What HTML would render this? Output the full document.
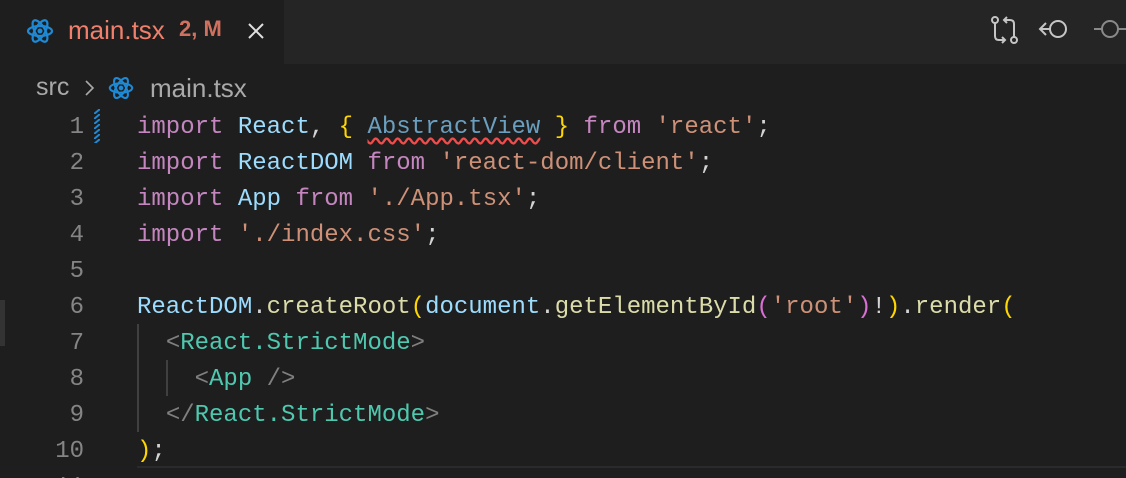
<!DOCTYPE html>
<html><head><style>
*{margin:0;padding:0;box-sizing:border-box}
html,body{width:1126px;height:478px;overflow:hidden}
body{background:#1e1e1e;position:relative;font-family:"Liberation Sans",sans-serif}
.tabbar{position:absolute;left:0;top:0;width:1126px;height:64px;background:#252526}
.tab{position:absolute;left:0;top:0;width:284px;height:64px;background:#1e1e1e}
.abs{position:absolute;white-space:pre}
.code{position:absolute;font-family:"Liberation Mono",monospace;font-size:24px;line-height:36px;height:368px;overflow:hidden}
.row{position:relative;height:36px}
.ln{position:absolute;left:0;width:84px;text-align:right;color:#858585}
.kw{color:#c586c0}.id{color:#9cdcfe}.st{color:#ce9178}.fn{color:#dcdcaa}.br{color:#ffd700}.tg{color:#4ec9b0}.pu{color:#808080}.df{color:#d4d4d4}.br2{color:#da70d6}
</style></head><body>
<div class="tabbar"><div class="tab"></div></div>
<svg class="abs" style="left:25px;top:16px" width="30" height="30" viewBox="-15 -15 30 30" fill="none" stroke="#1e8ad6" stroke-width="2.2"><ellipse rx="12" ry="5"/><ellipse rx="12" ry="5" transform="rotate(60)"/><ellipse rx="12" ry="5" transform="rotate(120)"/><circle r="2.5" fill="#1e8ad6" stroke="none"/></svg>
<div class="abs" style="left:68px;top:15px;font-size:26px;color:#f0806c">main.tsx</div>
<div class="abs" style="left:179px;top:16px;font-size:22px;color:#d0705e;font-weight:bold">2, M</div>
<svg class="abs" style="left:246px;top:21px" width="20" height="20" viewBox="0 0 20 20" stroke="#e0e0e0" stroke-width="2"><path d="M3 3L17 17M17 3L3 17"/></svg>
<svg class="abs" style="left:988px;top:14px" width="34" height="34" viewBox="0 0 34 34" fill="none" stroke="#c5c5c5" stroke-width="2"><circle cx="7" cy="6" r="3"/><path d="M7 9V22q0 4 4 4h6M14 23l3 3-3 3"/><circle cx="26" cy="26" r="3"/><path d="M26 23V10q0-4-4-4h-6M19 3l-3 3 3 3"/></svg>
<svg class="abs" style="left:1038px;top:16px" width="36" height="26" viewBox="0 0 36 26" fill="none" stroke="#c5c5c5" stroke-width="2"><circle cx="20" cy="13" r="8"/><path d="M12 13H3M8 7l-6 6 6 6"/></svg>
<svg class="abs" style="left:1094px;top:16px" width="32" height="26" viewBox="0 0 32 26" fill="none" stroke="#8a8a8a" stroke-width="2"><circle cx="16" cy="13" r="8"/><path d="M0 13h8M24 13h8"/></svg>
<div class="abs" style="left:36px;top:73px;font-size:25px;color:#a9a9a9">src</div>
<svg class="abs" style="left:83px;top:78px" width="12" height="20" viewBox="0 0 12 20" fill="none" stroke="#a9a9a9" stroke-width="1.6"><path d="M3 3l7 7-7 7"/></svg>
<svg class="abs" style="left:107px;top:74px" width="28" height="28" viewBox="-15 -15 30 30" fill="none" stroke="#1e8ad6" stroke-width="2.2"><ellipse rx="12" ry="5"/><ellipse rx="12" ry="5" transform="rotate(60)"/><ellipse rx="12" ry="5" transform="rotate(120)"/><circle r="2.5" fill="#1e8ad6" stroke="none"/></svg>
<div class="abs" style="left:150px;top:73px;font-size:26px;color:#a9a9a9">main.tsx</div>
<svg class="abs" style="left:94px;top:109px" width="6" height="34"><defs><pattern id="h" width="6" height="5" patternUnits="userSpaceOnUse"><path d="M0 5L6 0" stroke="#1e8ad6" stroke-width="2"/></pattern></defs><rect width="6" height="34" fill="url(#h)"/></svg>
<div class="abs" style="left:0;top:300px;width:5px;height:46px;background:#333"></div>
<div class="abs" style="left:137px;top:466px;width:989px;height:12px;background:#1e1e1e;border-top:2px solid #2a2a2a"></div>
<div class="abs" style="left:137px;top:324px;width:2px;height:108px;background:#404040"></div>
<div class="abs" style="left:166px;top:360px;width:2px;height:36px;background:#404040"></div>
<div class="code" style="left:0;top:110px;width:1126px"><div class="row"><span class="ln">1</span><span class="abs" style="left:137px"><span class="kw">import</span> <span class="id">React</span><span class="df">, </span><span class="br">{</span> <span style="color:#6a9fbf;text-decoration:underline wavy #f14c4c;text-underline-offset:4px">AbstractView</span> <span class="br">}</span> <span class="kw">from</span> <span class="st">'react'</span><span class="df">;</span></span></div><div class="row"><span class="ln">2</span><span class="abs" style="left:137px"><span class="kw">import</span> <span class="id">ReactDOM</span> <span class="kw">from</span> <span class="st">'react-dom/client'</span><span class="df">;</span></span></div><div class="row"><span class="ln">3</span><span class="abs" style="left:137px"><span class="kw">import</span> <span class="id">App</span> <span class="kw">from</span> <span class="st">'./App.tsx'</span><span class="df">;</span></span></div><div class="row"><span class="ln">4</span><span class="abs" style="left:137px"><span class="kw">import</span> <span class="st">'./index.css'</span><span class="df">;</span></span></div><div class="row"><span class="ln">5</span></div><div class="row"><span class="ln">6</span><span class="abs" style="left:137px"><span class="id">ReactDOM</span><span class="df">.</span><span class="fn">createRoot</span><span class="br">(</span><span class="id">document</span><span class="df">.</span><span class="fn">getElementById</span><span class="br2">(</span><span class="st">'root'</span><span class="br2">)</span><span class="df">!</span><span class="br">)</span><span class="df">.</span><span class="fn">render</span><span class="br">(</span></span></div><div class="row"><span class="ln">7</span><span class="abs" style="left:137px">  <span class="pu">&lt;</span><span class="tg">React.StrictMode</span><span class="pu">&gt;</span></span></div><div class="row"><span class="ln">8</span><span class="abs" style="left:137px">    <span class="pu">&lt;</span><span class="tg">App</span> <span class="pu">/&gt;</span></span></div><div class="row"><span class="ln">9</span><span class="abs" style="left:137px">  <span class="pu">&lt;/</span><span class="tg">React.StrictMode</span><span class="pu">&gt;</span></span></div><div class="row"><span class="ln">10</span><span class="abs" style="left:137px"><span class="br">)</span><span class="df">;</span></span></div><div class="row"><span class="ln">11</span></div></div>
</body></html>
